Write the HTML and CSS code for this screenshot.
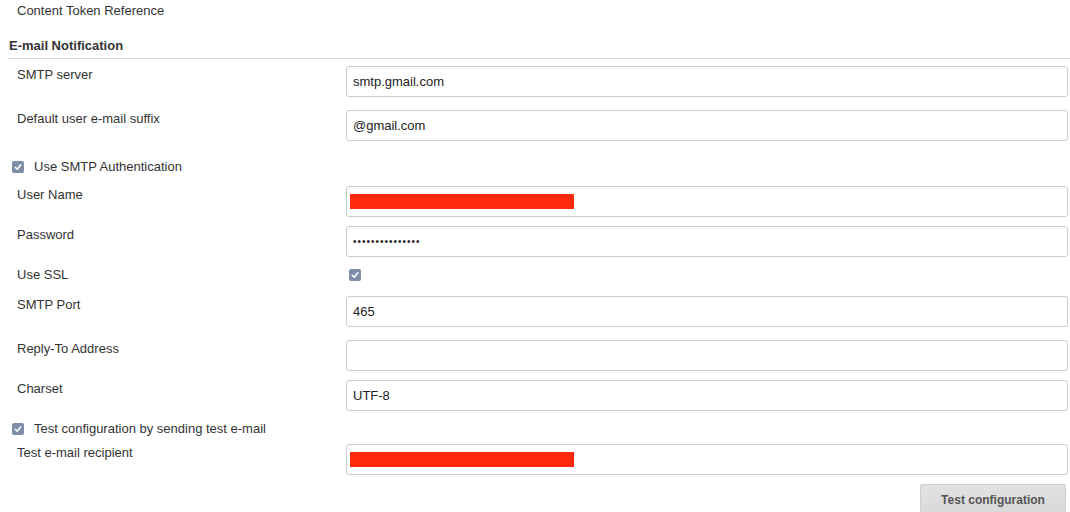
FILE: index.html
```html
<!DOCTYPE html>
<html>
<head>
<meta charset="utf-8">
<link rel="stylesheet" href="styles.css">
</head>
<body>
<div class="page">
  <div class="token">Content Token Reference</div>
  <div class="section-title">E-mail Notification</div>

  <div class="field gap-7">
    <div class="label">SMTP server</div>
    <input class="text" type="text" value="smtp.gmail.com">
  </div>
  <div class="field gap-13">
    <div class="label">Default user e-mail suffix</div>
    <input class="text" type="text" value="@gmail.com">
  </div>

  <div class="check-row gap-18">
    <span class="check"><svg viewBox="0 0 12 12" width="12" height="12"><path d="M3.2 6.3 L5.2 8.3 L8.8 3.8" fill="none" stroke="#fff" stroke-width="1.5" stroke-linecap="round" stroke-linejoin="round"/></svg></span>
    <span>Use SMTP Authentication</span>
  </div>

  <div class="field gap-11">
    <div class="label">User Name</div>
    <div class="masked"><input class="text" type="text" value=""><span class="redact"></span></div>
  </div>
  <div class="field gap-9">
    <div class="label">Password</div>
    <input class="text pw" type="password" value="aaaaaaaaaaaaaaa">
  </div>

  <div class="field-line gap-10">
    <div class="label">Use SSL</div>
    <span class="check ssl"><svg viewBox="0 0 12 12" width="12" height="12"><path d="M3.2 6.3 L5.2 8.3 L8.8 3.8" fill="none" stroke="#fff" stroke-width="1.5" stroke-linecap="round" stroke-linejoin="round"/></svg></span>
  </div>

  <div class="field gap-13">
    <div class="label">SMTP Port</div>
    <input class="text" type="text" value="465">
  </div>
  <div class="field gap-13">
    <div class="label">Reply-To Address</div>
    <input class="text" type="text" value="">
  </div>
  <div class="field gap-9">
    <div class="label">Charset</div>
    <input class="text" type="text" value="UTF-8">
  </div>

  <div class="check-row gap-10">
    <span class="check"><svg viewBox="0 0 12 12" width="12" height="12"><path d="M3.2 6.3 L5.2 8.3 L8.8 3.8" fill="none" stroke="#fff" stroke-width="1.5" stroke-linecap="round" stroke-linejoin="round"/></svg></span>
    <span>Test configuration by sending test e-mail</span>
  </div>

  <div class="field gap-7">
    <div class="label">Test e-mail recipient</div>
    <div class="masked"><input class="text" type="text" value=""><span class="redact"></span></div>
  </div>

  <div class="actions">
    <button class="btn" type="button">Test configuration</button>
  </div>
</div>
</body>
</html>
```

FILE: styles.css
```css
html, body {
  margin: 0;
  padding: 0;
  background: #fff;
}
body {
  font-family: "Liberation Sans", Arial, Helvetica, sans-serif;
  font-size: 13px;
  line-height: 16px;
  color: #333;
  overflow: hidden;
}
.page {
  width: 1070px;
}
.token {
  margin-top: 3px;
  padding-left: 17px;
}
.section-title {
  margin-top: 19px;
  margin-left: 8px;
  padding-left: 1px;
  padding-bottom: 4px;
  border-bottom: 1px solid #d9d9d9;
  font-weight: bold;
}
.field {
  display: flex;
  align-items: flex-start;
  padding-right: 2px;
}
.field-line {
  display: flex;
  align-items: center;
  height: 16px;
}
.label {
  flex: 0 0 346px;
  box-sizing: border-box;
  padding-left: 17px;
  padding-top: 1px;
}
.field-line .label {
  padding-top: 0;
}
.text {
  flex: 1;
  box-sizing: border-box;
  height: 31px;
  margin: 0;
  padding: 0 6px;
  border: 1px solid #cbcbcb;
  border-radius: 3px;
  font-family: "Liberation Sans", Arial, Helvetica, sans-serif;
  font-size: 13px;
  color: #222;
  background: #fff;
  outline: none;
}
.pw {
  font-size: 10px;
  letter-spacing: 1px;
}
.masked {
  flex: 1;
  display: flex;
  position: relative;
}
.masked .text {
  width: 100%;
}
.redact {
  position: absolute;
  left: 4px;
  top: 8px;
  width: 224px;
  height: 15px;
  background: #ff2a0e;
}
.check-row {
  display: flex;
  align-items: center;
  height: 16px;
  padding-left: 12px;
}
.check {
  display: inline-flex;
  align-items: center;
  justify-content: center;
  width: 12px;
  height: 12px;
  border-radius: 2px;
  background: #7e8ea8;
  margin-right: 10px;
}
.check.ssl {
  margin-left: 3px;
}
.gap-7 { margin-top: 7px; }
.gap-9 { margin-top: 9px; }
.gap-10 { margin-top: 10px; }
.gap-11 { margin-top: 11px; }
.gap-13 { margin-top: 13px; }
.gap-18 { margin-top: 18px; }
.actions {
  display: flex;
  justify-content: flex-end;
  margin-top: 9px;
  padding-right: 4px;
}
.btn {
  width: 146px;
  height: 30px;
  margin: 0;
  padding: 2px 0 0;
  border: 1px solid #cfcfcf;
  border-radius: 2px;
  background: linear-gradient(#e2e2e2, #d9d9d9);
  font-family: "Liberation Sans", Arial, Helvetica, sans-serif;
  font-size: 12px;
  font-weight: bold;
  color: #555;
}
```
